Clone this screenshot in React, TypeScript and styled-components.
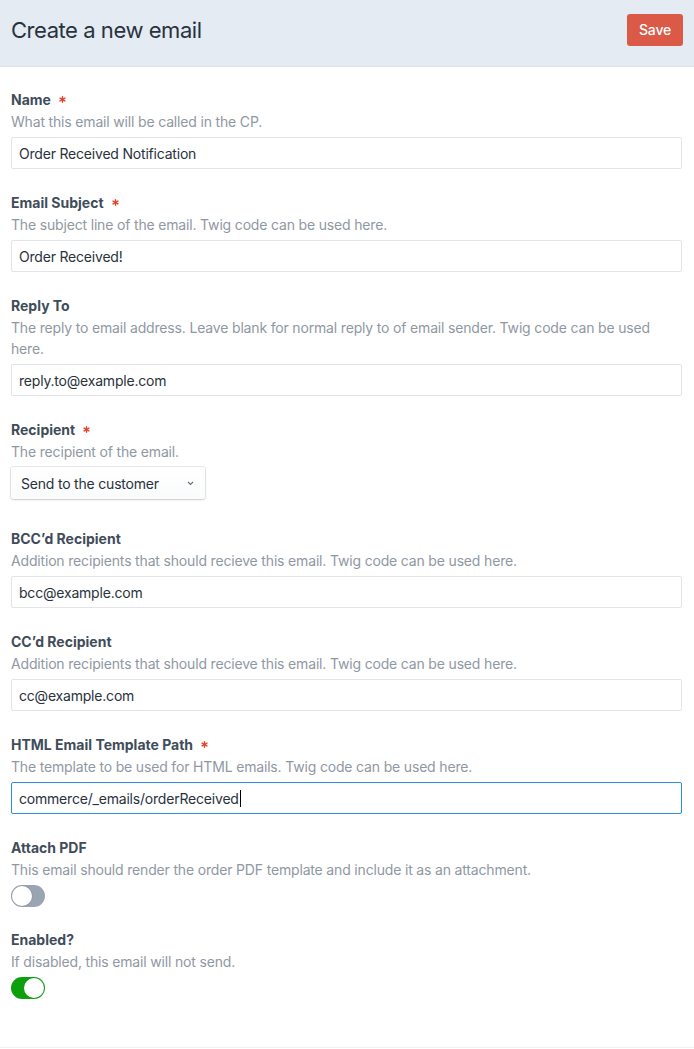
import React from "react";
import styled, { createGlobalStyle } from "styled-components";

const Global = createGlobalStyle`
  html, body { margin: 0; padding: 0; background: #fff; }
  body { font-family: Inter, "Noto Sans", sans-serif; -webkit-font-smoothing: antialiased; }
  * { box-sizing: border-box; }
`;

const Page = styled.div`
  width: 694px;
  min-height: 1049px;
  display: flex;
  flex-direction: column;
`;

const Header = styled.header`
  height: 67px;
  background: #e4ebf3;
  border-bottom: 1px solid #dfe5ec;
  display: flex;
  align-items: center;
  justify-content: space-between;
  padding: 0 11px 7px;
`;

const Title = styled.h1`
  margin: 0;
  font-size: 22px;
  font-weight: 400;
  color: #29323d;
  letter-spacing: -0.45px;
`;

const SaveButton = styled.button`
  width: 56px;
  height: 32px;
  border: none;
  border-radius: 3px;
  background: #da5a47;
  color: #fff;
  font-family: inherit;
  font-size: 14px;
  font-weight: 500;
  letter-spacing: -0.2px;
`;

const Form = styled.main`
  display: flex;
  flex-direction: column;
  gap: 24px;
  padding: 23px 12px 0 11px;
  flex: 1;
`;

const Field = styled.div<{ $extra?: number }>`
  display: flex;
  flex-direction: column;
  margin-bottom: ${(p) => p.$extra ?? 0}px;
`;

const Label = styled.div`
  display: flex;
  align-items: center;
  gap: 8px;
  height: 19px;
  font-size: 14px;
  font-weight: 700;
  color: #3f4d5a;
`;

const Required = styled.svg`
  width: 7px;
  height: 7px;
`;

const Instructions = styled.div`
  margin-top: 2px;
  font-size: 14px;
  line-height: 21px;
  color: #8f98a3;
  letter-spacing: -0.17px;
`;

const TextInput = styled.div<{ $focused?: boolean }>`
  margin-top: 5px;
  height: 32px;
  border: 1px solid ${(p) => (p.$focused ? "#2d8fe0" : "#e1e5ea")};
  border-radius: 2px;
  padding: 0 7px;
  display: flex;
  align-items: center;
  font-size: 14px;
  color: #29323d;
  letter-spacing: -0.2px;
`;

const Caret = styled.span`
  display: inline-block;
  width: 1px;
  height: 17px;
  background: #000;
  margin-left: 1px;
`;

const Select = styled.div`
  margin-top: 5px;
  width: 194px;
  height: 32px;
  border-radius: 3px;
  background: linear-gradient(#fff, #fafbfc);
  box-shadow: 0 0 0 1px rgba(31, 41, 51, 0.1), 0 1px 2px rgba(31, 41, 51, 0.15);
  display: flex;
  align-items: center;
  justify-content: space-between;
  padding: 0 11px 0 10px;
  font-size: 14px;
  color: #29323d;
  letter-spacing: -0.2px;
`;

const Chevron = styled.svg`
  width: 7px;
  height: 5px;
`;

const Toggle = styled.div<{ $on?: boolean }>`
  margin-top: 5px;
  width: 34px;
  height: 22px;
  border-radius: 11px;
  background: ${(p) => (p.$on ? "#0e9f0e" : "#9aa5b1")};
  padding: 1px;
  display: flex;
  justify-content: ${(p) => (p.$on ? "flex-end" : "flex-start")};
`;

const Knob = styled.div<{ $on?: boolean }>`
  width: 20px;
  height: 20px;
  border-radius: 50%;
  background: #fff;
  box-shadow: ${(p) => (p.$on ? "none" : "0 0 0 1px rgba(0,0,0,0.05)")};
`;

const Footer = styled.div`
  height: 49px;
  margin-top: 48px;
  border-top: 1px solid #eef1f5;
`;

const Star = () => (
  <Required viewBox="0 0 10 10">
    <g stroke="#e5422b" strokeWidth="2" strokeLinecap="round">
      <line x1="5" y1="1" x2="5" y2="9" />
      <line x1="1.5" y1="3" x2="8.5" y2="7" />
      <line x1="1.5" y1="7" x2="8.5" y2="3" />
    </g>
  </Required>
);

type FieldDef = {
  label: string;
  required?: boolean;
  instructions: string;
  value: string;
  focused?: boolean;
};

const topFields: FieldDef[] = [
  { label: "Name", required: true, instructions: "What this email will be called in the CP.", value: "Order Received Notification" },
  { label: "Email Subject", required: true, instructions: "The subject line of the email. Twig code can be used here.", value: "Order Received!" },
  {
    label: "Reply To",
    instructions:
      "The reply to email address. Leave blank for normal reply to of email sender. Twig code can be used here.",
    value: "reply.to@example.com",
  },
];

const bottomFields: FieldDef[] = [
  { label: "BCC’d Recipient", instructions: "Addition recipients that should recieve this email. Twig code can be used here.", value: "bcc@example.com" },
  { label: "CC’d Recipient", instructions: "Addition recipients that should recieve this email. Twig code can be used here.", value: "cc@example.com" },
  {
    label: "HTML Email Template Path",
    required: true,
    instructions: "The template to be used for HTML emails. Twig code can be used here.",
    value: "commerce/_emails/orderReceived",
    focused: true,
  },
];

const TextField = ({ f }: { f: FieldDef }) => (
  <Field>
    <Label>
      {f.label}
      {f.required && <Star />}
    </Label>
    <Instructions>{f.instructions}</Instructions>
    <TextInput $focused={f.focused}>
      {f.value}
      {f.focused && <Caret />}
    </TextInput>
  </Field>
);

export default function App() {
  return (
    <Page>
      <Global />
      <Header>
        <Title>Create a new email</Title>
        <SaveButton>Save</SaveButton>
      </Header>
      <Form>
        {topFields.map((f) => (
          <TextField key={f.label} f={f} />
        ))}
        <Field $extra={6}>
          <Label>
            Recipient
            <Star />
          </Label>
          <Instructions>The recipient of the email.</Instructions>
          <Select>
            Send to the customer
            <Chevron viewBox="0 0 7 5">
              <path d="M1 1 L3.5 3.5 L6 1" fill="none" stroke="#606d7b" strokeWidth="1.1" />
            </Chevron>
          </Select>
        </Field>
        {bottomFields.map((f) => (
          <TextField key={f.label} f={f} />
        ))}
        <Field $extra={-1}>
          <Label>Attach PDF</Label>
          <Instructions>This email should render the order PDF template and include it as an attachment.</Instructions>
          <Toggle>
            <Knob />
          </Toggle>
        </Field>
        <Field>
          <Label>Enabled?</Label>
          <Instructions>If disabled, this email will not send.</Instructions>
          <Toggle $on>
            <Knob $on />
          </Toggle>
        </Field>
      </Form>
      <Footer />
    </Page>
  );
}
